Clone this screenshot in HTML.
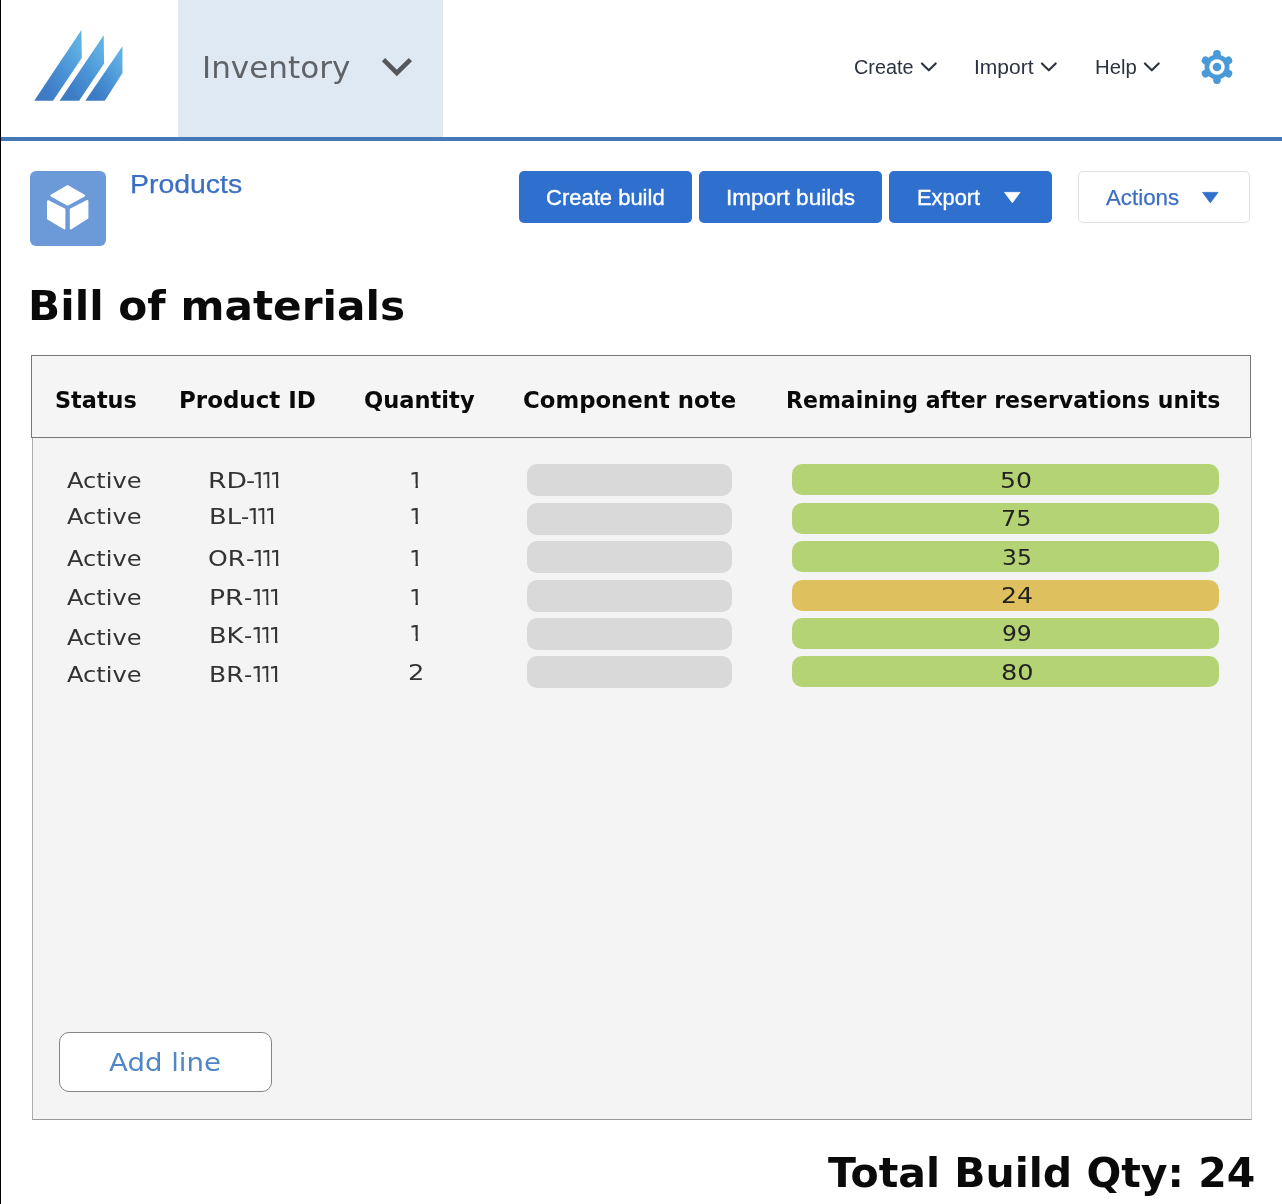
<!DOCTYPE html>
<html lang="en">
<head>
<meta charset="utf-8">
<title>Bill of materials</title>
<style>
html,body{margin:0;padding:0}
body{width:1282px;height:1204px;position:relative;overflow:hidden;background:#fff;font-family:"Liberation Sans",sans-serif}
.abs{position:absolute}
.t{position:absolute;white-space:nowrap;line-height:1;transform-origin:0 0;margin:0;padding:0}
#edge{left:0;top:0;width:1px;height:1204px;background:#000}
#tab{left:178px;top:0;width:265px;height:137px;background:#dfe9f3}
#rule{left:1px;top:137px;width:1281px;height:4px;background:#4479b5}
.btn{position:absolute;top:171px;height:52px;border-radius:5px;background:#2f6fce}
#bt1{left:519px;width:173px}
#bt2{left:699px;width:183px}
#bt3{left:889px;width:163px}
#bt4{left:1078px;width:172px;background:#fff;box-sizing:border-box;border:1px solid #dcdfe4}
#picon{left:30px;top:170.5px;width:75.5px;height:75.5px;border-radius:6px;background:#6c9ad9}
#thead{left:31px;top:355px;width:1220px;height:83px;box-sizing:border-box;border:1px solid #777;background:#f5f5f5}
#tbody{left:32px;top:438px;width:1220px;height:682px;box-sizing:border-box;border:1px solid #cfcfcf;border-left-color:#ababab;border-bottom-color:#9a9a9a;border-top:none;background:#f4f4f4}
.gb{position:absolute;left:527px;width:205px;height:32px;border-radius:10px;background:#d9d9d9}
.vb{position:absolute;left:792px;width:427px;height:31px;border-radius:10px;background:#b3d374}
.vb.y{background:#dfc05e}
#addb{left:59px;top:1032px;width:213px;height:60px;box-sizing:border-box;border:1px solid #858585;border-radius:10px;background:#fff}
svg{position:absolute;overflow:visible}
#txt{position:absolute;left:0;top:0;width:1282px;height:1204px;will-change:transform}
#inv{left:201.77px;top:53.20px;font:400 30.23px/1 "DejaVu Sans", "Liberation Sans", sans-serif;color:#5f6368;transform:scaleX(1.0277)}
#n1{left:853.78px;top:57.00px;font:400 20.05px/1 "Liberation Sans", "DejaVu Sans", sans-serif;color:#2b3240;transform:scaleX(0.9889)}
#n2{left:973.78px;top:57.00px;font:400 20.05px/1 "Liberation Sans", "DejaVu Sans", sans-serif;color:#2b3240;transform:scaleX(1.0494)}
#n3{left:1094.60px;top:57.00px;font:400 20.05px/1 "Liberation Sans", "DejaVu Sans", sans-serif;color:#2b3240;transform:scaleX(1.0144)}
#prod{left:129.75px;top:171.30px;font:400 26.03px/1 "Liberation Sans", "DejaVu Sans", sans-serif;color:#3a6fc2;-webkit-text-stroke:0.25px #3a6fc2;transform:scaleX(1.0926)}
#b1{left:545.93px;top:187.00px;font:400 22.33px/1 "Liberation Sans", "DejaVu Sans", sans-serif;color:#ffffff;-webkit-text-stroke:0.35px #fff;transform:scaleX(0.9853)}
#b2{left:725.53px;top:187.00px;font:400 22.33px/1 "Liberation Sans", "DejaVu Sans", sans-serif;color:#ffffff;-webkit-text-stroke:0.35px #fff;transform:scaleX(1.0089)}
#b3{left:916.55px;top:187.00px;font:400 22.33px/1 "Liberation Sans", "DejaVu Sans", sans-serif;color:#ffffff;-webkit-text-stroke:0.35px #fff;transform:scaleX(0.9793)}
#b4{left:1106.18px;top:187.00px;font:400 22.33px/1 "Liberation Sans", "DejaVu Sans", sans-serif;color:#3a6fc2;-webkit-text-stroke:0.25px #3a6fc2;transform:scaleX(0.9985)}
#title{left:27.67px;top:284.90px;font:700 41.67px/1 "DejaVu Sans", "Liberation Sans", sans-serif;color:#0a0a0a;transform:scaleX(1.0139)}
#h1{left:54.57px;top:388.70px;font:700 23.60px/1 "DejaVu Sans", "Liberation Sans", sans-serif;color:#0a0a0a;transform:scaleX(0.9483)}
#h2{left:178.96px;top:388.70px;font:700 23.60px/1 "DejaVu Sans", "Liberation Sans", sans-serif;color:#0a0a0a;transform:scaleX(0.9727)}
#h3{left:363.69px;top:388.70px;font:700 23.60px/1 "DejaVu Sans", "Liberation Sans", sans-serif;color:#0a0a0a;transform:scaleX(0.9567)}
#h4{left:523.15px;top:388.70px;font:700 23.60px/1 "DejaVu Sans", "Liberation Sans", sans-serif;color:#0a0a0a;transform:scaleX(0.9661)}
#h5{left:785.71px;top:388.70px;font:700 23.60px/1 "DejaVu Sans", "Liberation Sans", sans-serif;color:#0a0a0a;transform:scaleX(0.9339)}
#a0{left:66.80px;top:470.00px;font:400 22.00px/1 "DejaVu Sans", "Liberation Sans", sans-serif;color:#333333;transform:scaleX(1.0954)}
#p0{left:208.24px;top:470.00px;font:400 22.00px/1 "DejaVu Sans", "Liberation Sans", sans-serif;color:#333333;transform:scaleX(1.2082)}
#y0{left:245.93px;top:470.00px;font:400 22.00px/1 "DejaVu Sans", "Liberation Sans", sans-serif;color:#333333;transform:scaleX(1.1499)}
#d0{left:252.45px;top:470.00px;font:400 22.00px/1 "DejaVu Sans", "Liberation Sans", sans-serif;color:#333333;transform:scaleX(1.0400)}
#d0 b{display:inline-block;font-weight:400;margin-right:-5.58px;clip-path:polygon(0 0,8.57px 0,8.57px 100%,6.27px 100%,6.27px 13.16px,0 13.16px)}
#q0{left:409.05px;top:470.00px;font:400 22.00px/1 "DejaVu Sans", "Liberation Sans", sans-serif;color:#333333;transform:scaleX(1.0400)}
#q0 b{display:inline-block;font-weight:400;margin-right:0.00px;clip-path:polygon(0 0,8.57px 0,8.57px 100%,6.27px 100%,6.27px 13.16px,0 13.16px)}
#v0{left:1000.36px;top:469.90px;font:400 22.00px/1 "DejaVu Sans", "Liberation Sans", sans-serif;color:#222222;transform:scaleX(1.1427)}
#a1{left:66.80px;top:505.90px;font:400 22.00px/1 "DejaVu Sans", "Liberation Sans", sans-serif;color:#333333;transform:scaleX(1.0954)}
#p1{left:208.50px;top:505.70px;font:400 22.00px/1 "DejaVu Sans", "Liberation Sans", sans-serif;color:#333333;transform:scaleX(1.1733)}
#y1{left:241.02px;top:505.70px;font:400 22.00px/1 "DejaVu Sans", "Liberation Sans", sans-serif;color:#333333;transform:scaleX(1.0336)}
#d1{left:247.15px;top:505.70px;font:400 22.00px/1 "DejaVu Sans", "Liberation Sans", sans-serif;color:#333333;transform:scaleX(1.0400)}
#d1 b{display:inline-block;font-weight:400;margin-right:-5.58px;clip-path:polygon(0 0,8.57px 0,8.57px 100%,6.27px 100%,6.27px 13.16px,0 13.16px)}
#q1{left:409.05px;top:505.80px;font:400 22.00px/1 "DejaVu Sans", "Liberation Sans", sans-serif;color:#333333;transform:scaleX(1.0400)}
#q1 b{display:inline-block;font-weight:400;margin-right:0.00px;clip-path:polygon(0 0,8.57px 0,8.57px 100%,6.27px 100%,6.27px 13.16px,0 13.16px)}
#v1{left:1001.17px;top:507.80px;font:400 22.00px/1 "DejaVu Sans", "Liberation Sans", sans-serif;color:#222222;transform:scaleX(1.0845)}
#a2{left:66.80px;top:547.50px;font:400 22.00px/1 "DejaVu Sans", "Liberation Sans", sans-serif;color:#333333;transform:scaleX(1.0954)}
#p2{left:208.31px;top:547.50px;font:400 22.00px/1 "DejaVu Sans", "Liberation Sans", sans-serif;color:#333333;transform:scaleX(1.1435)}
#y2{left:246.35px;top:547.50px;font:400 22.00px/1 "DejaVu Sans", "Liberation Sans", sans-serif;color:#333333;transform:scaleX(1.0787)}
#d2{left:252.45px;top:547.50px;font:400 22.00px/1 "DejaVu Sans", "Liberation Sans", sans-serif;color:#333333;transform:scaleX(1.0400)}
#d2 b{display:inline-block;font-weight:400;margin-right:-5.58px;clip-path:polygon(0 0,8.57px 0,8.57px 100%,6.27px 100%,6.27px 13.16px,0 13.16px)}
#q2{left:409.05px;top:547.50px;font:400 22.00px/1 "DejaVu Sans", "Liberation Sans", sans-serif;color:#333333;transform:scaleX(1.0400)}
#q2 b{display:inline-block;font-weight:400;margin-right:0.00px;clip-path:polygon(0 0,8.57px 0,8.57px 100%,6.27px 100%,6.27px 13.16px,0 13.16px)}
#v2{left:1001.63px;top:547.00px;font:400 22.00px/1 "DejaVu Sans", "Liberation Sans", sans-serif;color:#222222;transform:scaleX(1.0684)}
#a3{left:66.80px;top:586.60px;font:400 22.00px/1 "DejaVu Sans", "Liberation Sans", sans-serif;color:#333333;transform:scaleX(1.0954)}
#p3{left:208.59px;top:586.70px;font:400 22.00px/1 "DejaVu Sans", "Liberation Sans", sans-serif;color:#333333;transform:scaleX(1.2088)}
#y3{left:244.32px;top:586.70px;font:400 22.00px/1 "DejaVu Sans", "Liberation Sans", sans-serif;color:#333333;transform:scaleX(1.0336)}
#d3{left:250.65px;top:586.70px;font:400 22.00px/1 "DejaVu Sans", "Liberation Sans", sans-serif;color:#333333;transform:scaleX(1.0400)}
#d3 b{display:inline-block;font-weight:400;margin-right:-5.58px;clip-path:polygon(0 0,8.57px 0,8.57px 100%,6.27px 100%,6.27px 13.16px,0 13.16px)}
#q3{left:409.05px;top:586.60px;font:400 22.00px/1 "DejaVu Sans", "Liberation Sans", sans-serif;color:#333333;transform:scaleX(1.0400)}
#q3 b{display:inline-block;font-weight:400;margin-right:0.00px;clip-path:polygon(0 0,8.57px 0,8.57px 100%,6.27px 100%,6.27px 13.16px,0 13.16px)}
#v3{left:1000.69px;top:584.50px;font:400 22.00px/1 "DejaVu Sans", "Liberation Sans", sans-serif;color:#222222;transform:scaleX(1.1451)}
#a4{left:66.80px;top:627.20px;font:400 22.00px/1 "DejaVu Sans", "Liberation Sans", sans-serif;color:#333333;transform:scaleX(1.0954)}
#p4{left:208.68px;top:624.90px;font:400 22.00px/1 "DejaVu Sans", "Liberation Sans", sans-serif;color:#333333;transform:scaleX(1.1657)}
#y4{left:244.32px;top:624.90px;font:400 22.00px/1 "DejaVu Sans", "Liberation Sans", sans-serif;color:#333333;transform:scaleX(1.0336)}
#d4{left:250.65px;top:624.90px;font:400 22.00px/1 "DejaVu Sans", "Liberation Sans", sans-serif;color:#333333;transform:scaleX(1.0400)}
#d4 b{display:inline-block;font-weight:400;margin-right:-5.58px;clip-path:polygon(0 0,8.57px 0,8.57px 100%,6.27px 100%,6.27px 13.16px,0 13.16px)}
#q4{left:409.05px;top:622.50px;font:400 22.00px/1 "DejaVu Sans", "Liberation Sans", sans-serif;color:#333333;transform:scaleX(1.0400)}
#q4 b{display:inline-block;font-weight:400;margin-right:0.00px;clip-path:polygon(0 0,8.57px 0,8.57px 100%,6.27px 100%,6.27px 13.16px,0 13.16px)}
#v4{left:1002.12px;top:623.40px;font:400 22.00px/1 "DejaVu Sans", "Liberation Sans", sans-serif;color:#222222;transform:scaleX(1.0624)}
#a5{left:66.80px;top:663.70px;font:400 22.00px/1 "DejaVu Sans", "Liberation Sans", sans-serif;color:#333333;transform:scaleX(1.0954)}
#p5{left:208.79px;top:663.60px;font:400 22.00px/1 "DejaVu Sans", "Liberation Sans", sans-serif;color:#333333;transform:scaleX(1.1406)}
#y5{left:244.32px;top:663.60px;font:400 22.00px/1 "DejaVu Sans", "Liberation Sans", sans-serif;color:#333333;transform:scaleX(1.0336)}
#d5{left:250.65px;top:663.60px;font:400 22.00px/1 "DejaVu Sans", "Liberation Sans", sans-serif;color:#333333;transform:scaleX(1.0400)}
#d5 b{display:inline-block;font-weight:400;margin-right:-5.58px;clip-path:polygon(0 0,8.57px 0,8.57px 100%,6.27px 100%,6.27px 13.16px,0 13.16px)}
#q5{left:407.99px;top:661.50px;font:400 22.00px/1 "DejaVu Sans", "Liberation Sans", sans-serif;color:#333333;transform:scaleX(1.1698)}
#v5{left:1000.83px;top:662.20px;font:400 22.00px/1 "DejaVu Sans", "Liberation Sans", sans-serif;color:#222222;transform:scaleX(1.1652)}
#add{left:109.15px;top:1051.10px;font:400 24.65px/1 "DejaVu Sans", "Liberation Sans", sans-serif;color:#4f86c6;transform:scaleX(1.1190)}
#total{left:827.66px;top:1152.00px;font:700 41.53px/1 "DejaVu Sans", "Liberation Sans", sans-serif;color:#0a0a0a;transform:scaleX(0.9874)}

</style>
</head>
<body>
<div class="abs" id="tab"></div>
<div class="abs" id="rule"></div>
<div class="abs" id="edge"></div>

<svg id="logo" style="left:0;top:0" width="160" height="136" viewBox="0 0 160 136">
<defs>
<linearGradient id="lg" x1="1" y1="0.3" x2="0.3" y2="0.95">
<stop offset="0" stop-color="#5fb0e5"/><stop offset="0.5" stop-color="#4a92d6"/><stop offset="1" stop-color="#3d7bc5"/>
</linearGradient>
</defs>
<polygon points="34.2,100.8 81.4,29.9 81.8,57.9 53,100.8" fill="url(#lg)"/>
<polygon points="59.6,100.8 103.7,35.3 104.1,63.4 79.1,100.8" fill="url(#lg)"/>
<polygon points="85.3,100.8 122.4,46.2 122.5,73.1 104.8,100.8" fill="url(#lg)"/>
</svg>

<svg id="chev0" style="left:382px;top:58px" width="31" height="19" viewBox="0 0 31 19"><path d="M1.5 1.7 L14.8 15 L28.4 1.7" fill="none" stroke="#54585d" stroke-width="4.6" stroke-linecap="butt" stroke-linejoin="miter"/></svg>
<svg id="chev1" style="left:920px;top:62px" width="18" height="11" viewBox="0 0 18 11"><path d="M1.9 1.4 L8.8 8.3 L15.7 1.4" fill="none" stroke="#2b3240" stroke-width="2.1" stroke-linecap="round" stroke-linejoin="round"/></svg>
<svg id="chev2" style="left:1040px;top:62px" width="18" height="11" viewBox="0 0 18 11"><path d="M1.9 1.4 L8.8 8.3 L15.7 1.4" fill="none" stroke="#2b3240" stroke-width="2.1" stroke-linecap="round" stroke-linejoin="round"/></svg>
<svg id="chev3" style="left:1143.4px;top:62px" width="18" height="11" viewBox="0 0 18 11"><path d="M1.9 1.4 L8.8 8.3 L15.7 1.4" fill="none" stroke="#2b3240" stroke-width="2.1" stroke-linecap="round" stroke-linejoin="round"/></svg>

<svg id="gear" style="left:1196.6px;top:47px" width="40" height="40" viewBox="-20.4 -20.4 40.8 40.8">
<g fill="#4b9ad8">
<circle r="12.7"/>
<rect x="-3.9" y="-17.3" width="7.8" height="9" rx="3.7" transform="rotate(0)"/>
<rect x="-3.9" y="-17.3" width="7.8" height="9" rx="3.7" transform="rotate(60)"/>
<rect x="-3.9" y="-17.3" width="7.8" height="9" rx="3.7" transform="rotate(120)"/>
<rect x="-3.9" y="-17.3" width="7.8" height="9" rx="3.7" transform="rotate(180)"/>
<rect x="-3.9" y="-17.3" width="7.8" height="9" rx="3.7" transform="rotate(240)"/>
<rect x="-3.9" y="-17.3" width="7.8" height="9" rx="3.7" transform="rotate(300)"/>
</g>
<circle r="7.9" fill="#fff"/>
<circle r="4.4" fill="#4b9ad8"/>
</svg>

<div class="abs" id="picon"></div>
<svg id="cube" style="left:30px;top:170px" width="76" height="76" viewBox="0 0 76 76">
<g fill="#fff" stroke="#fff" stroke-width="2" stroke-linejoin="round">
<polygon points="37.6,16.2 54.2,25.6 37.6,34.7 21.3,25.6"/>
<polygon points="18,31.2 34.4,39.4 34.4,58.4 18,48.6"/>
<polygon points="40.8,39.4 57.4,31 57.4,48 40.8,58.4"/>
</g>
</svg>

<div class="btn" id="bt1"></div>
<div class="btn" id="bt2"></div>
<div class="btn" id="bt3"></div>
<div class="btn" id="bt4"></div>
<svg style="left:1004px;top:191.5px" width="17" height="11" viewBox="0 0 17 11"><path d="M0.6 0.4 H16 L8.3 10.8 Z" fill="#fff" stroke="#fff" stroke-width="0.8" stroke-linejoin="round"/></svg>
<svg style="left:1202px;top:191.5px" width="17" height="11" viewBox="0 0 17 11"><path d="M0.6 0.4 H16 L8.3 10.8 Z" fill="#2f6fce" stroke="#2f6fce" stroke-width="0.8" stroke-linejoin="round"/></svg>

<div class="abs" id="tbody"></div>
<div class="abs" id="thead"></div>

<div class="gb" style="top:464px"></div>
<div class="gb" style="top:502.5px"></div>
<div class="gb" style="top:541px"></div>
<div class="gb" style="top:579.5px"></div>
<div class="gb" style="top:618px"></div>
<div class="gb" style="top:656.3px"></div>
<div class="vb" style="top:464.4px"></div>
<div class="vb" style="top:502.8px"></div>
<div class="vb" style="top:541.1px"></div>
<div class="vb y" style="top:580px"></div>
<div class="vb" style="top:618px"></div>
<div class="vb" style="top:656.3px"></div>

<div class="abs" id="addb"></div>

<div id="txt">
<span class="t" id="inv">Inventory</span>
<span class="t" id="n1">Create</span>
<span class="t" id="n2">Import</span>
<span class="t" id="n3">Help</span>
<span class="t" id="prod">Products</span>
<span class="t" id="b1">Create build</span>
<span class="t" id="b2">Import builds</span>
<span class="t" id="b3">Export</span>
<span class="t" id="b4">Actions</span>
<span class="t" id="title">Bill of materials</span>
<span class="t" id="h1">Status</span>
<span class="t" id="h2">Product ID</span>
<span class="t" id="h3">Quantity</span>
<span class="t" id="h4">Component note</span>
<span class="t" id="h5">Remaining after reservations units</span>
<span class="t" id="a0">Active</span>
<span class="t" id="p0">RD</span><span class="t" id="y0">-</span><span class="t" id="d0"><b>1</b><b>1</b><b>1</b></span>
<span class="t" id="q0"><b>1</b></span>
<span class="t" id="v0">50</span>
<span class="t" id="a1">Active</span>
<span class="t" id="p1">BL</span><span class="t" id="y1">-</span><span class="t" id="d1"><b>1</b><b>1</b><b>1</b></span>
<span class="t" id="q1"><b>1</b></span>
<span class="t" id="v1">75</span>
<span class="t" id="a2">Active</span>
<span class="t" id="p2">OR</span><span class="t" id="y2">-</span><span class="t" id="d2"><b>1</b><b>1</b><b>1</b></span>
<span class="t" id="q2"><b>1</b></span>
<span class="t" id="v2">35</span>
<span class="t" id="a3">Active</span>
<span class="t" id="p3">PR</span><span class="t" id="y3">-</span><span class="t" id="d3"><b>1</b><b>1</b><b>1</b></span>
<span class="t" id="q3"><b>1</b></span>
<span class="t" id="v3">24</span>
<span class="t" id="a4">Active</span>
<span class="t" id="p4">BK</span><span class="t" id="y4">-</span><span class="t" id="d4"><b>1</b><b>1</b><b>1</b></span>
<span class="t" id="q4"><b>1</b></span>
<span class="t" id="v4">99</span>
<span class="t" id="a5">Active</span>
<span class="t" id="p5">BR</span><span class="t" id="y5">-</span><span class="t" id="d5"><b>1</b><b>1</b><b>1</b></span>
<span class="t" id="q5">2</span>
<span class="t" id="v5">80</span>
<span class="t" id="add">Add line</span>
<span class="t" id="total">Total Build Qty: 24</span>
</div>
</body>
</html>
